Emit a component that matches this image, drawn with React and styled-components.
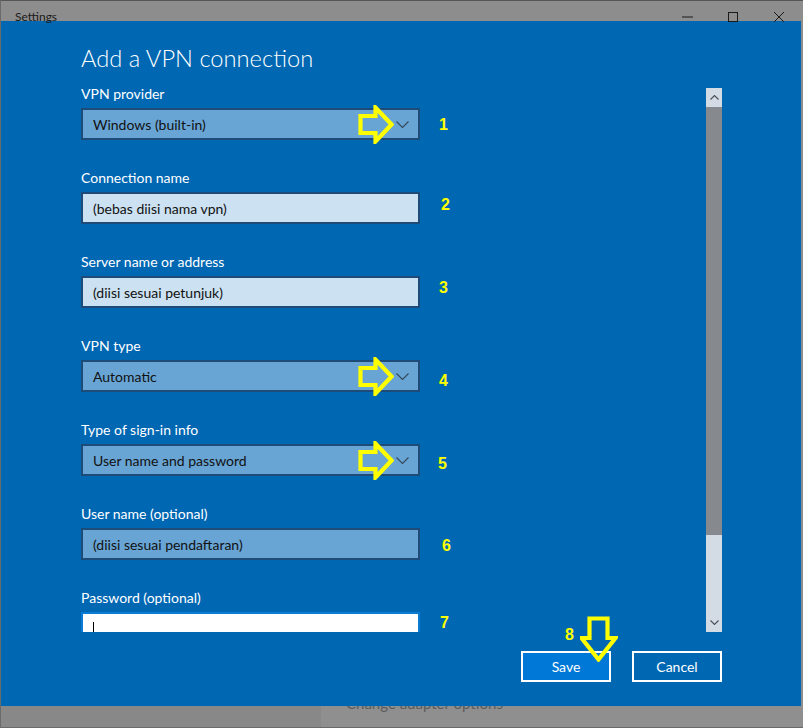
import React from "react";
import styled, { createGlobalStyle } from "styled-components";

const GlobalStyle = createGlobalStyle`
  html, body {
    margin: 0;
    padding: 0;
    overflow: hidden;
    background: #8c8c8c;
  }
  * {
    box-sizing: border-box;
  }
`;

const fields = [
  { label: "VPN provider", value: "Windows (built-in)", kind: "select", num: "1", arrow: true, dy: 1 },
  { label: "Connection name", value: "(bebas diisi nama vpn)", kind: "text", num: "2", dx: 2, dy: -3 },
  { label: "Server name or address", value: "(diisi sesuai petunjuk)", kind: "text", num: "3", dy: -4 },
  { label: "VPN type", value: "Automatic", kind: "select", num: "4", arrow: true, dy: 5 },
  { label: "Type of sign-in info", value: "User name and password", kind: "select", num: "5", arrow: true, dx: -1, dy: 4 },
  { label: "User name (optional)", value: "(diisi sesuai pendaftaran)", kind: "filled", num: "6", dx: 3, dy: 2 },
  { label: "Password (optional)", value: "", kind: "focus", num: "7", dx: 1, dy: -5 },
];

function Chevron() {
  return (
    <svg width="13" height="7" viewBox="0 0 13 7">
      <polyline points="0.5,0.5 6.5,6.5 12.5,0.5" fill="none" stroke="#34475a" strokeWidth="1.1" />
    </svg>
  );
}

function RightArrow() {
  return (
    <svg width="36" height="39" viewBox="0 0 36 39">
      <path
        d="M2.5 11 H17.5 V2.5 L33.5 19.5 L17.5 36.5 V28 H2.5 Z"
        fill="none"
        stroke="#ffff00"
        strokeWidth="4.2"
      />
    </svg>
  );
}

function DownArrow() {
  return (
    <svg width="38" height="46" viewBox="0 0 38 46">
      <path
        d="M9.5 2.5 H27.5 V22 H35.5 L18.5 43.5 L1.5 22 H9.5 Z"
        fill="none"
        stroke="#ffff00"
        strokeWidth="4.2"
      />
    </svg>
  );
}

function App() {
  return (
    <>
      <GlobalStyle />
      <Window>
        <TitleBar>
          <TitleText>Settings</TitleText>
          <Controls>
            <Control>
              <svg width="11" height="10" viewBox="0 0 11 10">
                <line x1="0" y1="5" x2="11" y2="5" stroke="#1a1a1a" strokeWidth="1" />
              </svg>
            </Control>
            <Control>
              <svg width="10" height="10" viewBox="0 0 10 10">
                <rect x="0.5" y="0.5" width="9" height="9" fill="none" stroke="#1a1a1a" strokeWidth="1" />
              </svg>
            </Control>
            <Control>
              <svg width="10" height="10" viewBox="0 0 10 10">
                <path d="M0 0 L10 10 M10 0 L0 10" stroke="#1a1a1a" strokeWidth="1" />
              </svg>
            </Control>
          </Controls>
        </TitleBar>

        <Dialog>
          <Heading>Add a VPN connection</Heading>
          <ScrollView>
            <Form>
              {fields.map((f) => (
                <Field key={f.label}>
                  <Label>{f.label}</Label>
                  <Line>
                    <BoxWrap>
                      <Box $kind={f.kind}>
                        {f.kind === "focus" ? <Caret /> : <BoxText>{f.value}</BoxText>}
                        {f.kind === "select" && <Chevron />}
                      </Box>
                      {f.arrow && (
                        <ArrowMark>
                          <RightArrow />
                        </ArrowMark>
                      )}
                    </BoxWrap>
                    <Number $dx={f.dx || 0} $dy={f.dy || 0}>
                      {f.num}
                    </Number>
                  </Line>
                </Field>
              ))}
            </Form>
            <Scrollbar>
              <ScrollButton>
                <svg width="9" height="5" viewBox="0 0 9 5">
                  <polyline points="0.5,4.5 4.5,0.5 8.5,4.5" fill="none" stroke="#4a4f55" strokeWidth="1.1" />
                </svg>
              </ScrollButton>
              <Thumb />
              <Track />
              <ScrollButton>
                <svg width="9" height="5" viewBox="0 0 9 5">
                  <polyline points="0.5,0.5 4.5,4.5 8.5,0.5" fill="none" stroke="#4a4f55" strokeWidth="1.1" />
                </svg>
              </ScrollButton>
            </Scrollbar>
          </ScrollView>

          <Footer>
            <SaveWrap>
              <Button $primary>Save</Button>
              <StepEight>8</StepEight>
              <DownMark>
                <DownArrow />
              </DownMark>
            </SaveWrap>
            <Button>Cancel</Button>
          </Footer>
        </Dialog>

        <BottomStrip>
          <NavPane />
          <MainPane>
            <BehindText>Change adapter options</BehindText>
          </MainPane>
        </BottomStrip>
      </Window>
    </>
  );
}

const Window = styled.div`
  width: 803px;
  height: 728px;
  display: flex;
  flex-direction: column;
  background: #8d8d8d;
  border-top: 1px solid #555555;
  border-left: 1px solid #6a6a6a;
  border-bottom: 1px solid #6a6a6a;
  font-family: Lato, "Noto Sans", sans-serif;
  overflow: hidden;
`;

const TitleBar = styled.div`
  height: 20px;
  flex-shrink: 0;
  display: flex;
  justify-content: space-between;
  position: relative;
  z-index: 2;
`;

const TitleText = styled.span`
  margin: 9px 0 0 14px;
  font-size: 12px;
  line-height: 14px;
  color: #1a1a1a;
`;

const Controls = styled.div`
  display: flex;
  padding-top: 11px;
  margin-right: 1px;
`;

const Control = styled.div`
  width: 46px;
  display: flex;
  justify-content: center;
  align-items: flex-start;
  svg {
    display: block;
  }
`;

const Dialog = styled.div`
  height: 685px;
  flex-shrink: 0;
  margin-right: 2px;
  background: #0067b3;
  padding: 22px 79px 0 80px;
  display: flex;
  flex-direction: column;
`;

const Heading = styled.h1`
  margin: 0 0 12px;
  font-family: Lato, "Noto Sans", sans-serif;
  font-weight: 300;
  font-size: 23.7px;
  line-height: 30px;
  color: #ffffff;
`;

const ScrollView = styled.div`
  height: 547px;
  display: flex;
  overflow: hidden;
`;

const Form = styled.div`
  flex: 1;
  display: flex;
  flex-direction: column;
  gap: 29px;
`;

const Field = styled.div`
  display: flex;
  flex-direction: column;
  flex-shrink: 0;
`;

const Label = styled.div`
  font-size: 14px;
  line-height: 18px;
  color: #ffffff;
  margin-bottom: 5px;
`;

const Line = styled.div`
  display: flex;
  align-items: center;
`;

const BoxWrap = styled.div`
  position: relative;
  width: 339px;
`;

const boxBackground = {
  select: "#68a5d4",
  filled: "#68a5d4",
  text: "#cce1f1",
  focus: "#ffffff",
};

const Box = styled.div`
  height: 32px;
  display: flex;
  align-items: center;
  justify-content: space-between;
  padding: 0 9px 0 10px;
  background: ${(p) => boxBackground[p.$kind]};
  border: 2px solid ${(p) => (p.$kind === "focus" ? "#0a7bd6" : "#1d4c79")};
  svg {
    display: block;
    margin-top: 1px;
  }
`;

const BoxText = styled.span`
  font-size: 14px;
  color: #111111;
`;

const Caret = styled.span`
  width: 1px;
  height: 20px;
  margin-top: 8px;
  background: #000000;
`;

const ArrowMark = styled.div`
  position: absolute;
  left: 277px;
  top: -3px;
  svg {
    display: block;
  }
`;

const Number = styled.span`
  margin-left: ${(p) => 19 + p.$dx}px;
  font-family: "Liberation Sans", Arial, sans-serif;
  font-weight: 700;
  font-size: 16px;
  color: #ffff00;
  transform: translateY(${(p) => p.$dy}px);
`;

const Scrollbar = styled.div`
  width: 16px;
  margin-top: 3px;
  display: flex;
  flex-direction: column;
  flex-shrink: 0;
`;

const ScrollButton = styled.div`
  height: 19px;
  background: #d3dce4;
  display: flex;
  align-items: center;
  justify-content: center;
  svg {
    display: block;
  }
`;

const Thumb = styled.div`
  height: 428px;
  background: #868a8f;
`;

const Track = styled.div`
  height: 78px;
  background: #d3dce4;
`;

const Footer = styled.div`
  margin-top: 19px;
  display: flex;
  justify-content: flex-end;
  gap: 21px;
`;

const SaveWrap = styled.div`
  position: relative;
`;

const Button = styled.button`
  width: 90px;
  height: 31px;
  padding: 0;
  border: 2px solid #ffffff;
  background: ${(p) => (p.$primary ? "#0078d7" : "transparent")};
  color: #ffffff;
  font-family: Lato, "Noto Sans", sans-serif;
  font-size: 14px;
  display: block;
`;

const StepEight = styled.span`
  position: absolute;
  left: 44px;
  top: -25px;
  font-family: "Liberation Sans", Arial, sans-serif;
  font-weight: 700;
  font-size: 16px;
  color: #ffff00;
`;

const DownMark = styled.div`
  position: absolute;
  left: 59px;
  top: -35px;
  svg {
    display: block;
  }
`;

const BottomStrip = styled.div`
  flex: 1;
  display: flex;
  overflow: hidden;
`;

const NavPane = styled.div`
  width: 320px;
  background: #888888;
`;

const MainPane = styled.div`
  flex: 1;
  background: #8f8f8f;
  padding-left: 25px;
`;

const BehindText = styled.div`
  margin-top: -10px;
  font-size: 15px;
  line-height: 15px;
  color: #5c5c5c;
`;

export default App;
